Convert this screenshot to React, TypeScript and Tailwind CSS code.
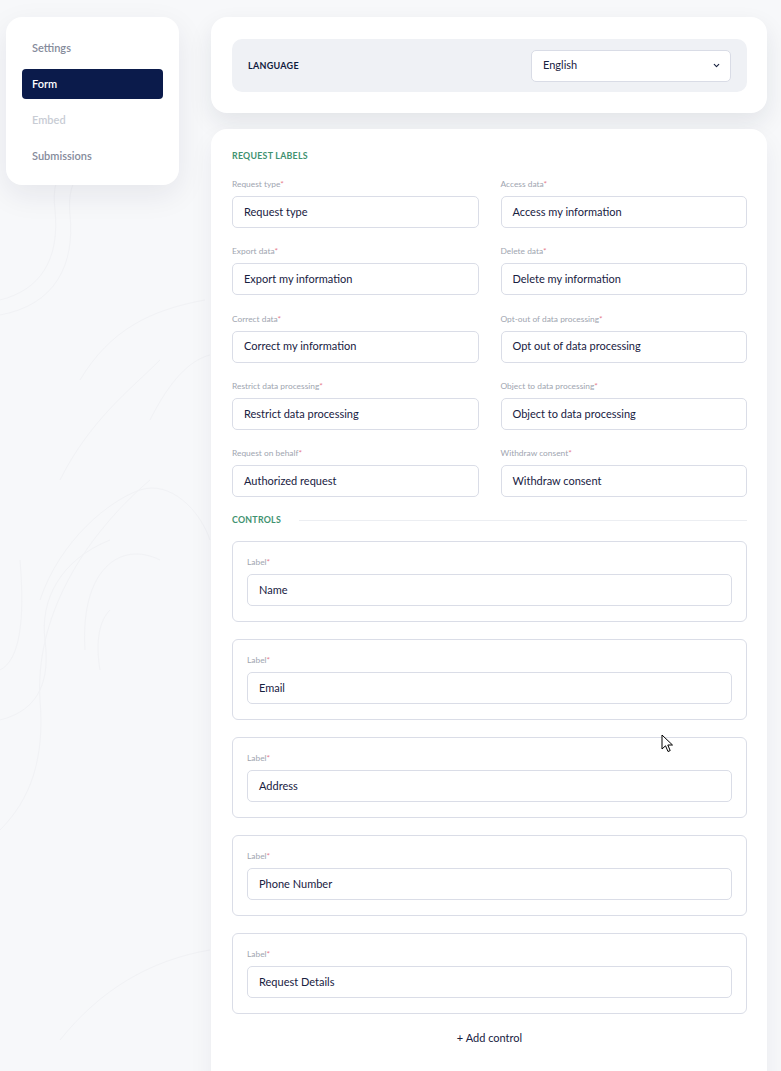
import { ChevronDown } from "lucide-react";

const requestLabels: { label: string; value: string }[] = [
  { label: "Request type", value: "Request type" },
  { label: "Access data", value: "Access my information" },
  { label: "Export data", value: "Export my information" },
  { label: "Delete data", value: "Delete my information" },
  { label: "Correct data", value: "Correct my information" },
  { label: "Opt-out of data processing", value: "Opt out of data processing" },
  { label: "Restrict data processing", value: "Restrict data processing" },
  { label: "Object to data processing", value: "Object to data processing" },
  { label: "Request on behalf", value: "Authorized request" },
  { label: "Withdraw consent", value: "Withdraw consent" },
];

const controls = ["Name", "Email", "Address", "Phone Number", "Request Details"];

const navItems = [
  { name: "Settings", state: "idle" },
  { name: "Form", state: "active" },
  { name: "Embed", state: "disabled" },
  { name: "Submissions", state: "idle" },
];

function FieldLabel({ text }: { text: string }) {
  return (
    <div className="h-[12px] leading-[12px] text-[8.4px] text-[#a0a5b0] mb-[6px]">
      {text}
      <span className="text-[#e77b8c]">*</span>
    </div>
  );
}

function TextBox({ value }: { value: string }) {
  return (
    <div className="h-[32px] flex items-center px-[11px] rounded-[5px] border border-[#dadde7] bg-white text-[11px] text-[#18213f]">
      {value}
    </div>
  );
}

function Sidebar() {
  return (
    <div className="w-[173px] h-[168px] shrink-0 rounded-[16px] bg-white shadow-[0_10px_30px_rgba(20,30,60,0.08)] px-[16px] pt-[16px]">
      <div className="flex flex-col gap-[6px]">
        {navItems.map(item => (
          <div
            key={item.name}
            className={`h-[30px] flex items-center px-[10px] rounded-[4px] text-[11px] font-semibold ${
              item.state === "active"
                ? "bg-[#0b1b4b] text-white font-bold"
                : item.state === "disabled"
                  ? "text-[#c8ccd4]"
                  : "text-[#858b9b]"
            }`}
          >
            {item.name}
          </div>
        ))}
      </div>
    </div>
  );
}

function LanguageCard() {
  return (
    <div className="rounded-[16px] bg-white shadow-[0_10px_24px_rgba(20,30,60,0.09)] pt-[22px] pb-[21px] pl-[21px] pr-[20px]">
      <div className="h-[53px] rounded-[10px] bg-[#eff1f5] flex items-center justify-between pl-[16px] pr-[16px]">
        <span className="text-[9px] font-bold tracking-[0.03em] text-[#0f1a3d]">
          LANGUAGE
        </span>
        <div className="w-[200px] h-[32px] rounded-[5px] border border-[#d9dce6] bg-white flex items-center justify-between pl-[11px] pr-[9px] text-[11px] text-[#18213f]">
          <span>English</span>
          <ChevronDown size={9} strokeWidth={3} className="text-[#18213f]" />
        </div>
      </div>
    </div>
  );
}

function FormCard() {
  return (
    <div className="rounded-t-[16px] bg-white shadow-[0_10px_24px_rgba(20,30,60,0.06)] pt-[21px] pb-[40px] pl-[21px] pr-[20px]">
      <div className="h-[12px] leading-[12px] text-[8.8px] font-bold tracking-[0.03em] text-[#3f9270] mb-[16px]">
        REQUEST LABELS
      </div>
      <div className="grid grid-cols-2 gap-x-[22px] gap-y-[17.3px]">
        {requestLabels.map(r => (
          <div key={r.label}>
            <FieldLabel text={r.label} />
            <TextBox value={r.value} />
          </div>
        ))}
      </div>

      <div className="flex items-center gap-[18px] mt-[17px] mb-[15px]">
        <span className="h-[12px] leading-[12px] text-[8.8px] font-bold tracking-[0.03em] text-[#3f9270]">
          CONTROLS
        </span>
        <div className="flex-1 h-px bg-[#eceef2]" />
      </div>

      <div className="flex flex-col gap-[17px]">
        {controls.map(c => (
          <div
            key={c}
            className="h-[81px] rounded-[6px] border border-[#dadde7] px-[14px] pt-[14px]"
          >
            <FieldLabel text="Label" />
            <TextBox value={c} />
          </div>
        ))}
      </div>

      <div className="mt-[16px] h-[16px] flex items-center justify-center text-[11px] text-[#18213f]">
        + Add control
      </div>
    </div>
  );
}

function Backdrop() {
  return (
    <svg
      className="absolute inset-0 w-full h-full pointer-events-none"
      viewBox="0 0 781 1071"
      fill="none"
      stroke="#f1f2f5"
      strokeWidth="1"
    >
      <path d="M0 300 C40 290 60 260 55 210 C50 170 70 150 110 140" />
      <path d="M0 315 C55 305 75 265 70 215 C66 175 85 160 130 150" />
      <path d="M80 380 C110 330 150 310 205 300" />
      <path d="M60 480 C90 420 130 390 160 360" />
      <path d="M150 420 C170 380 190 360 210 355" />
      <path d="M0 720 C40 710 50 680 45 640 C40 600 60 560 110 540" />
      <path d="M0 830 C30 800 45 760 40 700 C35 620 80 540 150 480" />
      <path d="M40 600 C60 540 110 500 140 490 C170 480 200 510 210 540" />
      <path d="M85 650 C80 570 120 540 160 560" />
      <path d="M0 670 C20 660 25 620 20 560" />
      <path d="M100 670 C95 640 100 620 110 610" />
      <path d="M60 1040 C100 990 150 960 210 950" />
    </svg>
  );
}

function Cursor() {
  return (
    <svg
      className="absolute left-[661px] top-[734px]"
      width="13"
      height="20"
      viewBox="0 0 13 20"
    >
      <path
        d="M1 1 L1 15 L4.5 11.8 L7 17.5 L9.2 16.6 L6.8 11 L11.5 11 Z"
        fill="white"
        stroke="black"
        strokeWidth="1"
        strokeLinejoin="round"
      />
    </svg>
  );
}

export default function App() {
  return (
    <div
      className="relative w-[781px] h-[1071px] overflow-hidden bg-[#f7f8fa]"
      style={{ fontFamily: "Lato, 'Noto Sans', sans-serif" }}
    >
      <Backdrop />
      <div className="relative flex pt-[17px] pl-[6px]">
        <Sidebar />
        <div className="ml-[32px] w-[556px] flex flex-col gap-[16px]">
          <LanguageCard />
          <FormCard />
        </div>
      </div>
      <Cursor />
    </div>
  );
}
